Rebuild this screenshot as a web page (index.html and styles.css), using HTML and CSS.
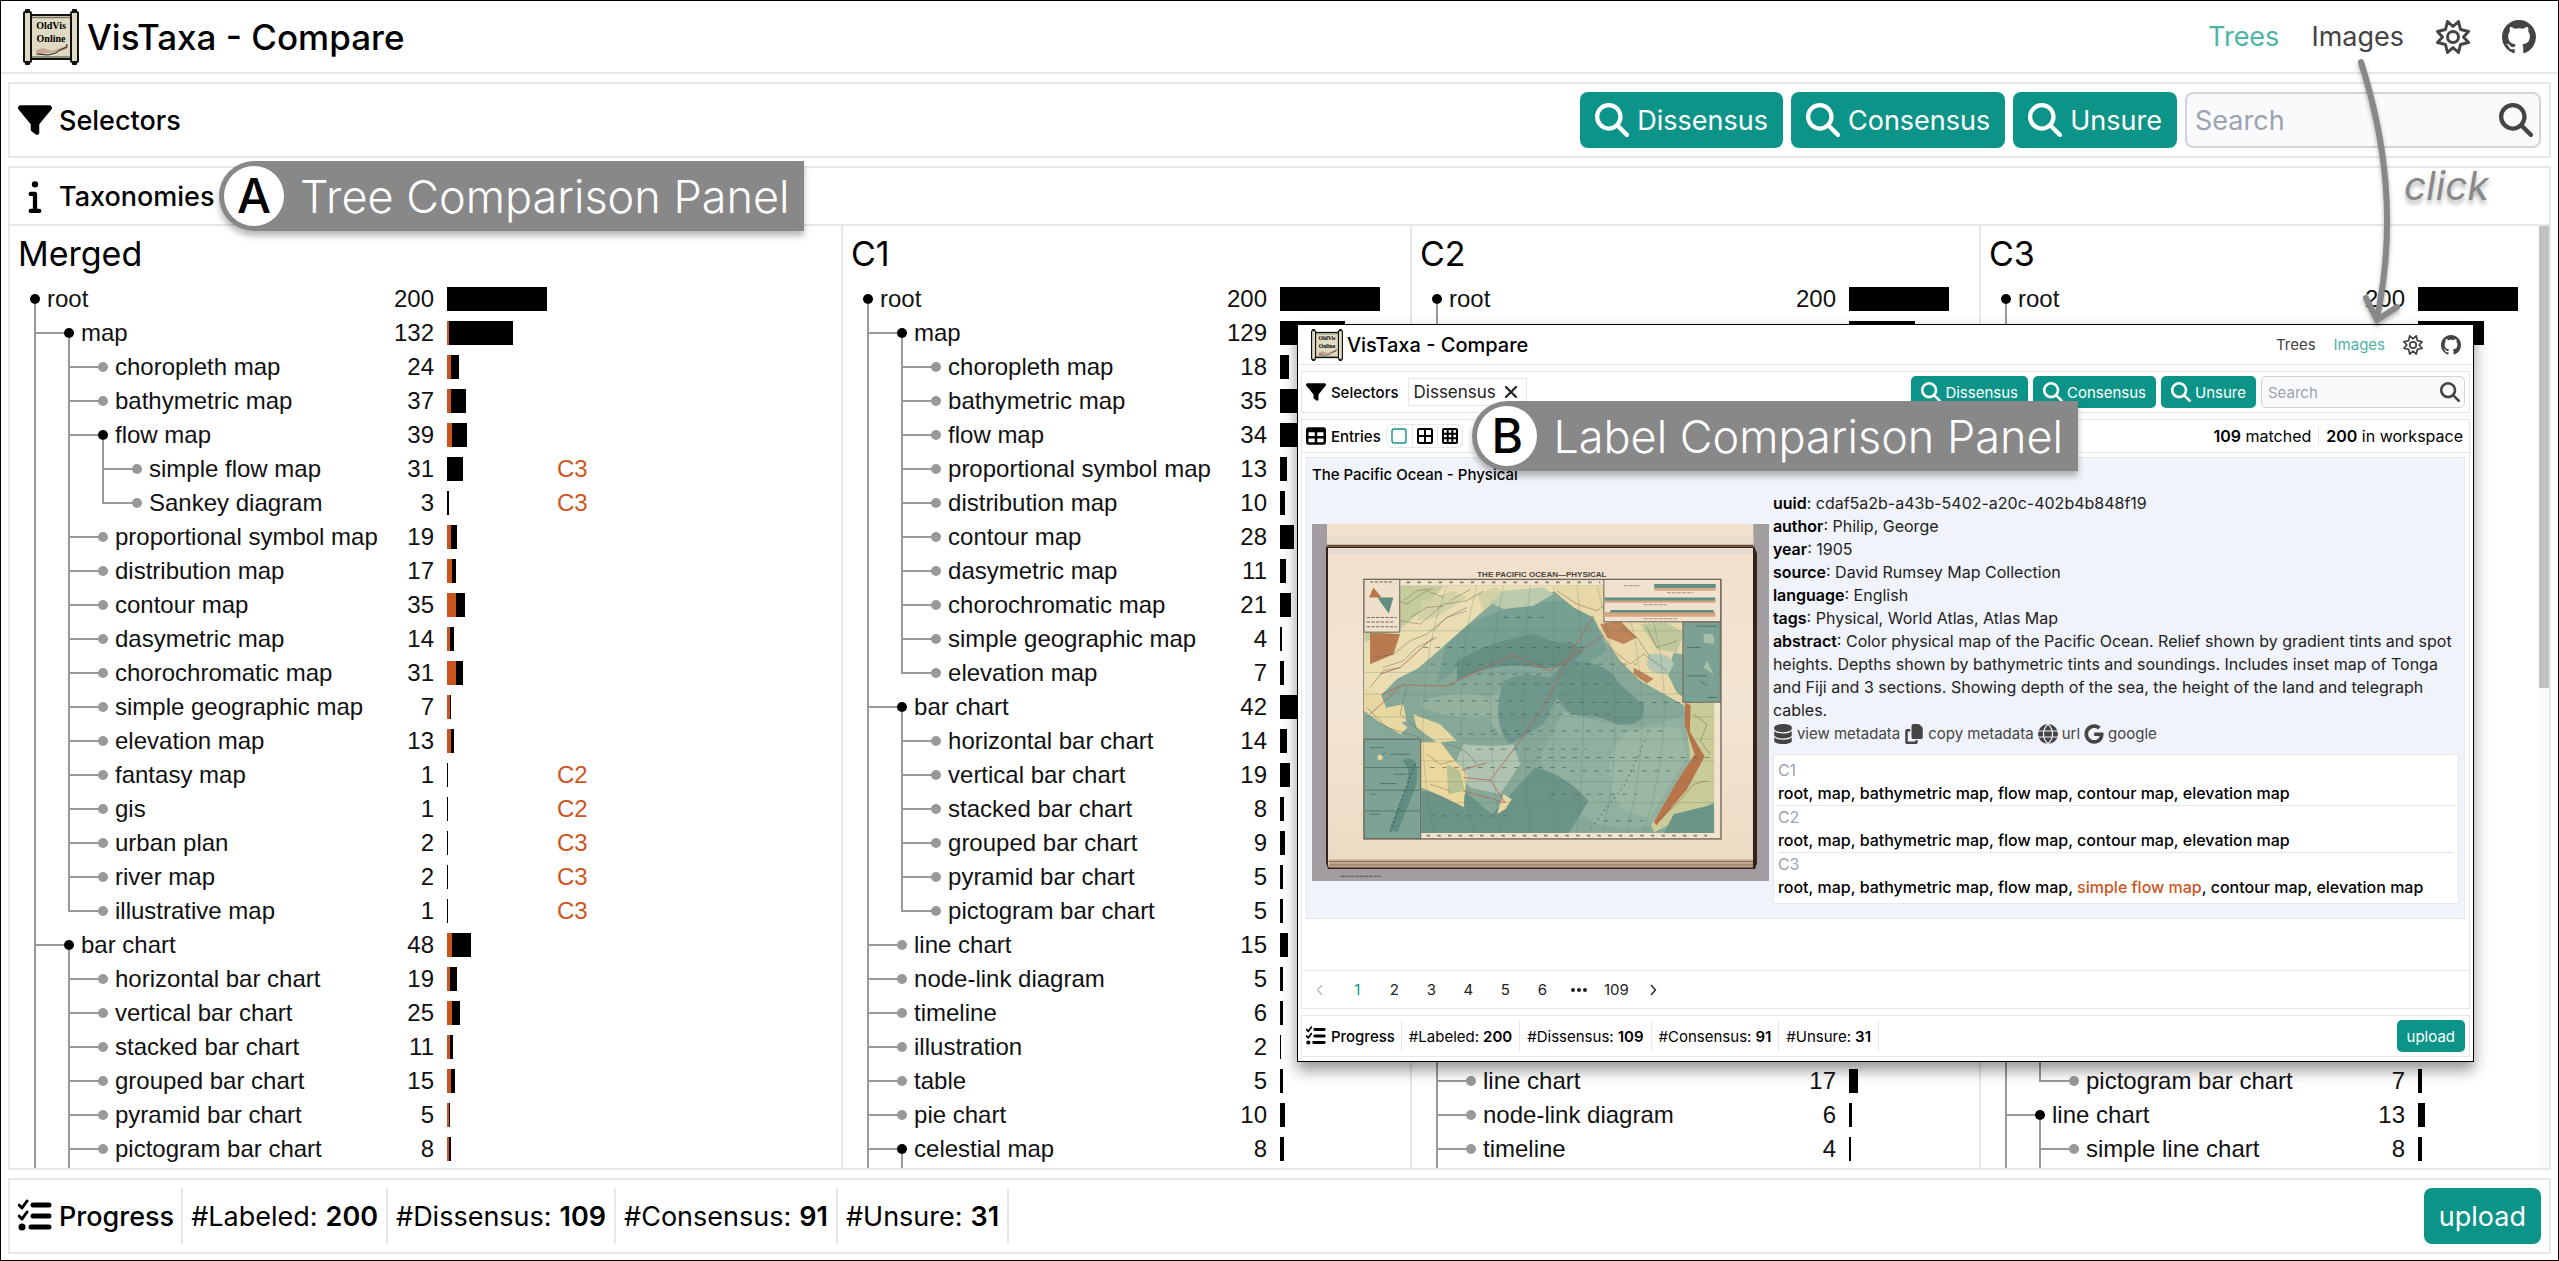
FILE: index.html
```html
<!DOCTYPE html>
<html lang="en">
<head>
<meta charset="utf-8">
<title>VisTaxa - Compare</title>
<link rel="stylesheet" href="styles.css">
</head>
<body>
<svg class="sprite" aria-hidden="true">
  <symbol id="filter" viewBox="0 0 512 512"><path d="M3.900 54.900C10.500 40.900 24.500 32 40 32H472c15.500 0 29.500 8.900 36.100 22.900s4.600 30.500-5.200 42.500L320 320.900V448c0 12.100-6.800 23.200-17.700 28.600s-23.800 4.300-33.500-3l-64-48c-8.100-6-12.800-15.500-12.800-25.600V320.900L9 97.300C-.7 85.400-2.800 68.800 3.900 54.900z"/></symbol>
  <symbol id="search" viewBox="0 0 512 512"><path d="M416 208c0 45.900-14.900 88.300-40 122.700L502.600 457.400c12.500 12.500 12.500 32.800 0 45.300s-32.800 12.500-45.300 0L330.700 376c-34.400 25.200-76.800 40-122.700 40C93.100 416 0 322.900 0 208S93.100 0 208 0S416 93.100 416 208zM208 352a144 144 0 1 0 0-288 144 144 0 1 0 0 288z"/></symbol>
  <symbol id="info" viewBox="0 0 192 512"><path d="M48 80a48 48 0 1 1 96 0A48 48 0 1 1 48 80zM0 224c0-17.700 14.300-32 32-32H96c17.700 0 32 14.300 32 32V448h32c17.700 0 32 14.300 32 32s-14.300 32-32 32H32c-17.700 0-32-14.300-32-32s14.300-32 32-32H64V256H32c-17.700 0-32-14.300-32-32z"/></symbol>
  <symbol id="list" viewBox="0 0 34 34"><path d="M1 6l3 3 5-7M1 17l3 3 5-7" fill="none" stroke="currentColor" stroke-width="3" stroke-linecap="round" stroke-linejoin="round"/><path d="M15 6h16M15 17h16M13 28h18" stroke="currentColor" stroke-width="5" stroke-linecap="round"/><circle cx="4" cy="28" r="3.500"/></symbol>
  <symbol id="gear" viewBox="0 0 34 34"><path d="M17 6.500 L22.500 1.500 L24.500 9.500 L32.500 11.500 L27.500 17 L32.500 22.500 L24.500 24.500 L22.500 32.500 L17 27.500 L11.500 32.500 L9.500 24.500 L1.500 22.500 L6.500 17 L1.500 11.500 L9.500 9.500 L11.500 1.500Z" fill="none" stroke="currentColor" stroke-width="3" stroke-linejoin="round"/><circle cx="17" cy="17" r="5.500" fill="none" stroke="currentColor" stroke-width="3"/></symbol>
  <symbol id="github" viewBox="0 0 16 16"><path d="M8 0C3.580 0 0 3.580 0 8c0 3.540 2.290 6.530 5.470 7.590.4.070.55-.17.55-.38 0-.19-.01-.82-.01-1.490-2.010.37-2.530-.49-2.690-.94-.09-.23-.48-.94-.82-1.130-.28-.15-.68-.52-.01-.53.63-.01 1.080.58 1.230.82.72 1.210 1.870.87 2.330.66.070-.52.28-.87.510-1.070-1.780-.2-3.640-.89-3.640-3.950 0-.87.31-1.590.82-2.150-.08-.2-.36-1.020.08-2.120 0 0 .67-.21 2.200.82.64-.18 1.320-.27 2-.27s1.360.09 2 .27c1.530-1.040 2.200-.82 2.200-.82.44 1.100.16 1.920.08 2.120.51.56.82 1.270.82 2.150 0 3.070-1.870 3.750-3.650 3.950.29.25.54.73.54 1.480 0 1.070-.01 1.930-.01 2.200 0 .21.15.46.55.38A8.010 8.010 0 0 0 16 8c0-4.420-3.580-8-8-8z"/></symbol>
  <symbol id="database" viewBox="0 0 448 512"><path d="M448 80v48c0 44.200-100.300 80-224 80S0 172.200 0 128V80C0 35.800 100.300 0 224 0S448 35.800 448 80zM393.200 214.700c20.800-7.400 39.900-16.900 54.800-28.600V288c0 44.200-100.300 80-224 80S0 332.200 0 288V186.100c14.900 11.800 34 21.200 54.800 28.600C99.700 230.700 159.500 240 224 240s124.300-9.300 169.200-25.300zM0 346.100c14.900 11.800 34 21.200 54.800 28.600C99.700 390.700 159.500 400 224 400s124.300-9.300 169.200-25.300c20.800-7.400 39.900-16.900 54.800-28.600V432c0 44.200-100.300 80-224 80S0 476.200 0 432V346.100z"/></symbol>
  <symbol id="copy" viewBox="0 0 448 512"><path d="M208 0H332.100c12.700 0 24.900 5.100 33.900 14.100l67.900 67.900c9 9 14.100 21.200 14.100 33.900V336c0 26.500-21.500 48-48 48H208c-26.500 0-48-21.500-48-48V48c0-26.500 21.500-48 48-48zM48 128h80v64H64V448H256V416h64v48c0 26.500-21.500 48-48 48H48c-26.500 0-48-21.500-48-48V176c0-26.500 21.500-48 48-48z"/></symbol>
  <symbol id="globe" viewBox="0 0 20 20"><circle cx="10" cy="10" r="10"/><path d="M0 7h20M0 13h20M10 0C4 6 4 14 10 20M10 0c6 6 6 14 0 20" fill="none" stroke="#f0f3f9" stroke-width="1.200"/></symbol>
  <symbol id="google" viewBox="0 0 488 512"><path d="M488 261.800C488 403.300 391.100 504 248 504 110.800 504 0 393.200 0 256S110.800 8 248 8c66.800 0 123 24.500 166.300 64.900l-67.500 64.900C258.500 52.600 94.300 116.600 94.300 256c0 86.500 69.100 156.600 153.700 156.600 98.200 0 135-70.400 140.800-106.900H248v-85.300h236.100c2.300 12.700 3.900 24.900 3.900 41.400z"/></symbol>
  <symbol id="table" viewBox="0 0 512 512"><path d="M64 256V160H224v96H64zm0 64H224v96H64V320zm224 96V320H448v96H288zM448 256H288V160H448v96zM64 32C28.700 32 0 60.700 0 96V416c0 35.300 28.700 64 64 64H448c35.300 0 64-28.700 64-64V96c0-35.300-28.700-64-64-64H64z"/></symbol>
  <symbol id="grid1" viewBox="0 0 16 16"><rect x="1" y="1" width="14" height="14" rx="2" fill="none" stroke="currentColor" stroke-width="1.400"/></symbol>
  <symbol id="grid2" viewBox="0 0 16 16"><path d="M2 1h12a1 1 0 0 1 1 1v12a1 1 0 0 1-1 1H2a1 1 0 0 1-1-1V2a1 1 0 0 1 1-1zM8 1v14M1 8h14" fill="none" stroke="currentColor" stroke-width="2"/></symbol>
  <symbol id="grid3" viewBox="0 0 16 16"><path d="M2 1h12a1 1 0 0 1 1 1v12a1 1 0 0 1-1 1H2a1 1 0 0 1-1-1V2a1 1 0 0 1 1-1zM5.700 1v14M10.300 1v14M1 5.700h14M1 10.300h14" fill="none" stroke="currentColor" stroke-width="2"/></symbol>
  <symbol id="cross" viewBox="0 0 14 14"><path d="M2 2l10 10M12 2L2 12" stroke="currentColor" stroke-width="2.200" stroke-linecap="round"/></symbol>
  <symbol id="prev" viewBox="0 0 10 12"><path d="M7 1L2.500 6 7 11" fill="none" stroke="currentColor" stroke-width="1.400"/></symbol>
  <symbol id="next" viewBox="0 0 10 12"><path d="M3 1l4.500 5L3 11" fill="none" stroke="currentColor" stroke-width="1.400"/></symbol>
  <symbol id="dots" viewBox="0 0 16 4"><circle cx="2" cy="2" r="2"/><circle cx="8" cy="2" r="2"/><circle cx="14" cy="2" r="2"/></symbol>
  <symbol id="logo" viewBox="0 0 56 56">
    <rect x="6" y="6" width="44" height="44" fill="#dedac3" stroke="#111" stroke-width="2"/>
    <path d="M8 8.500h40M8 48h40" stroke="#77756a" stroke-width="1.500"/>
    <g fill="#111"><rect x="2" y="0" width="5" height="56" rx="1"/><rect x="49" y="0" width="5" height="56" rx="1"/></g>
    <g fill="#dedac3" stroke="#111" stroke-width="2"><rect x="1" y="3" width="7" height="50" rx="1"/><rect x="48" y="3" width="7" height="50" rx="1"/></g>
    <text x="28" y="20" text-anchor="middle" font-family="Liberation Serif, serif" font-weight="700" font-size="10">OldVis</text>
    <text x="28" y="33" text-anchor="middle" font-family="Liberation Serif, serif" font-weight="700" font-size="10">Online</text>
    <path d="M13 41l7-2 9 3 8-3 7-3v4l-9 3-10 1-12 2z" fill="#c9a692"/><path d="M14 45l11 1 8-2 4-3 7-3v-3" fill="none" stroke="#222" stroke-width="1"/>
  </symbol>
</svg>

<div class="app">
  <header class="top">
    <svg class="logo"><use href="#logo"/></svg>
    <h1>VisTaxa - Compare</h1>
    <nav>
      <a href="#trees" class="active">Trees</a>
      <a href="#images">Images</a>
      <a href="#settings" aria-label="Settings"><svg class="icon"><use href="#gear"/></svg></a>
      <a href="#github" aria-label="GitHub"><svg class="icon"><use href="#github"/></svg></a>
    </nav>
  </header>

  <section class="panel bar">
    <h2><svg class="icon"><use href="#filter"/></svg>Selectors</h2>
    <div class="actions">
      <button><svg class="icon"><use href="#search"/></svg>Dissensus</button>
      <button><svg class="icon"><use href="#search"/></svg>Consensus</button>
      <button><svg class="icon"><use href="#search"/></svg>Unsure</button>
      <label class="search"><input type="text" placeholder="Search" aria-label="Search"><svg class="icon"><use href="#search"/></svg></label>
    </div>
  </section>

  <section class="panel taxonomies">
    <h2><svg class="icon"><use href="#info"/></svg>Taxonomies</h2>
    <div class="columns">
      <div class="column wide"><h3>Merged</h3><div class="tree" id="merged"></div></div>
      <div class="column"><h3>C1</h3><div class="tree" id="c1"></div></div>
      <div class="column"><h3>C2</h3><div class="tree" id="c2"></div></div>
      <div class="column last"><h3>C3</h3><div class="tree" id="c3"></div></div>
      <div class="scroll"><div class="thumb"></div></div>
    </div>
  </section>

  <footer class="panel bar">
    <h2><svg class="icon"><use href="#list"/></svg>Progress</h2>
    <ul class="stats">
      <li>#Labeled: <b>200</b></li><li>#Dissensus: <b>109</b></li><li>#Consensus: <b>91</b></li><li>#Unsure: <b>31</b></li>
    </ul>
    <button class="upload">upload</button>
  </footer>
</div>

<div class="inset">
  <header class="top">
    <svg class="logo"><use href="#logo"/></svg>
    <h1>VisTaxa - Compare</h1>
    <nav>
      <a href="#trees">Trees</a>
      <a href="#images" class="active">Images</a>
      <a href="#settings" aria-label="Settings"><svg class="icon"><use href="#gear"/></svg></a>
      <a href="#github" aria-label="GitHub"><svg class="icon"><use href="#github"/></svg></a>
    </nav>
  </header>
  <section class="panel bar">
    <h2><svg class="icon"><use href="#filter"/></svg>Selectors</h2>
    <span class="tag">Dissensus <svg><use href="#cross"/></svg></span>
    <div class="actions">
      <button><svg class="icon"><use href="#search"/></svg>Dissensus</button>
      <button><svg class="icon"><use href="#search"/></svg>Consensus</button>
      <button><svg class="icon"><use href="#search"/></svg>Unsure</button>
      <label class="search"><input type="text" placeholder="Search" aria-label="Search"><svg class="icon"><use href="#search"/></svg></label>
    </div>
  </section>
  <section class="panel entries">
    <div class="entries-head">
      <h2><svg class="icon"><use href="#table"/></svg>Entries</h2>
      <div class="toggle">
        <button class="on" aria-label="One column"><svg><use href="#grid1"/></svg></button>
        <button aria-label="Two columns"><svg><use href="#grid2"/></svg></button>
        <button aria-label="Three columns"><svg><use href="#grid3"/></svg></button>
      </div>
      <p class="matched"><span><b>109</b> matched</span><span><b>200</b> in workspace</span></p>
    </div>
    <article class="card">
      <h3>The Pacific Ocean - Physical</h3>
      <div class="entry">
        <svg class="map" viewBox="66 70 1370 1070" role="img" aria-label="Map of the Pacific Ocean">
          <defs>
            <linearGradient id="paper" x1="0" y1="0" x2="0" y2="1"><stop offset="0" stop-color="#f0e0cc"/><stop offset=".5" stop-color="#f3e5d3"/><stop offset="1" stop-color="#ecdac3"/></linearGradient>
            <clipPath id="frame"><rect x="222" y="254" width="1050" height="742"/></clipPath>
          </defs>
          <rect x="66" y="70" width="1370" height="1070" fill="#a29da1"/>
          <rect x="111" y="70" width="1278" height="70" fill="#f1e2cf"/>
          <rect x="111" y="108" width="1278" height="22" fill="#e9dccd"/>
          <path d="M108 138h1284l8 20v930l-6 16H114l-6-20z" fill="#33231a"/>
          <path d="M114 142h1274v955H114z" fill="url(#paper)"/>
          <path d="M114 152h1274" stroke="#e5dbd0" stroke-width="16"/>
          <path d="M111 135h1278" stroke="#5c4434" stroke-width="6"/>
          <path d="M116 1076h1272v24H116z" fill="#bfa68c"/><path d="M116 1082h1272M116 1092h1272" stroke="#8d735c" stroke-width="3"/>
          <rect x="222" y="236" width="1070" height="778" fill="#f2e4cc" stroke="#6b655a" stroke-width="4"/>
          <g clip-path="url(#frame)">
            <rect x="222" y="254" width="1050" height="742" fill="#85a899"/>
            <path d="M470 420q150-130 420-120l60 150-110 70q-150-80-300-50l-100 80z" fill="#769e91"/>
            <path d="M500 480q100-60 230-80 90 40 110 20l40 30q-40 60-140 50-130-20-240 40z" fill="#688f84"/>
            <path d="M830 480q120 0 150 60 60 60 80 70 10 70-80 60-80-40-130-20-60-60-70-120z" fill="#6c9387"/>
            <path d="M395 600q120-40 200-10l100-60 60 40-70 130q-60 20-90-50-100 10-200-30z" fill="#a0b9a5" opacity=".6"/>
            <path d="M640 540q90-40 180 10l-60 120-100 60q-60-60-20-190z" fill="#70978b"/>
            <path d="M820 630q110 40 230 50 80-20 140-40l20 170-110 160q-80 20-180 0-150-90-170-200z" fill="#91b09f"/>
            <path d="M1000 700q90-30 170-20l20 90-110 180-80-20q-90-120 0-230z" fill="#9bb7a5"/>
            <path d="M395 870l140 10 70 60 130-140q90 20 160 100l-60 96H395z" fill="#6c9387"/>
            <path d="M520 730q90 10 150 0l20 60-60 90-90-20-50-60z" fill="#b0c3b0"/>
            <path d="M222 254h600l-30 20-130 10-40 10-80 70-90 80-70 60-60 30-50 50-50 40z" fill="#e9ddb1"/>
            <path d="M222 254h240l-70 80-60 50-108 40z" fill="#c5cb9d"/>
            <path d="M400 300l90-30 40 20-90 60-60 10zM560 280l60-20 20 20-60 50z" fill="#d3d2a6"/>
            <path d="M240 396l90 4-20 60-70 30z" fill="#b87b50"/>
            <path d="M640 270l120-10 30 20-60 35-90 10-40-20z" fill="#bccbae"/>
            <path d="M790 270l60 50 60 30 30 60 50 70 60 60 90 50 70 40 10-14-60-40-30-60 20-60 120 20V254H790z" fill="#e8d8a8"/>
            <path d="M930 370l60-10 50 50-40 20-50-20zM1030 500l60 34-20 14-40-28z" fill="#bd8558"/>
            <path d="M1050 370l80-5 50 30-20 60-60-10z" fill="#bfc89d"/><path d="M1075 460q60-10 75 30l-15 30q-60 0-65-30z" fill="#b5c8b5"/>
            <path d="M222 560l50 20 20 50 60 50-20 20-70-40-40-30zM290 620l50-10 10 50-50 20zM370 640l80 30 50 50-60 5-60-45z" fill="#e7d8a2"/>
            <path d="M392 724l60 0 30 40 50 60-10 70 0 25-60-30-70-30z" fill="#ecd79c"/><path d="M470 790l40 20 14 60-50 10z" fill="#b9c392"/>
            <path d="M640 880l25 15-20 30-25 15z" fill="#e7d8a2"/>
            <path d="M1180 600l92 4v300l-120 60-60 30-10-20 60-90 60-90-10-90z" fill="#c9cb99"/>
            <path d="M1185 605l16 8-2 80 44 74-54 100-90 106-8-10 66-116 56-86-30-90z" fill="#b9754a"/>
            <path d="M1150 940l122-30v86h-150z" fill="#6c9588"/>
            <g fill="none" stroke="#6a5f45" stroke-width="2" opacity=".65">
              <path d="M240 340l60-50 50 20 60-40 50 20M260 390l70-30 60 10 70-60 70-10 50-30M250 470l60-10 50-40 50-20 60-50 60-20M280 500l60-20 40-40 60-30M240 560l40-50 50-10M340 300l40-30 50-6M360 350l50-30 50-4M430 390l40-40 60-30M480 300l60-34M800 270l60 40 60 20 50-40 70 20 70-30M930 390l40 60 50 40 40-30 70 50M990 380l50 30 40 60M1070 380l30 60 60-20M1000 340l-30-60M1210 640l40 30-20 50 30 40M1100 960l60-50 50-60 40-10M410 760l40 30 40-10M420 850l60 20M470 730q60 10 90 60M230 620l60 60 100 30M350 560l-20 80 60 50"/>
            </g>
            <g fill="none" stroke="#587a70" stroke-width="1.500" opacity=".5">
              <path d="M222 390h956M222 515h956M222 580h956M222 648h1050M222 715h1050M222 780h1050M222 842h1050M222 905h1050M560 254q-90 330-10 742M640 254q-70 330-10 742M720 254q-40 340 0 742M790 254q0 340 0 742M860 254q40 340 0 742M920 254q100 340 20 742M990 254q120 340 20 742M470 254q-120 330-40 742M1070 300q110 320-10 696"/>
            </g>
            <g fill="none" stroke="#3c5850" stroke-width="2.500" stroke-dasharray="14 22" opacity=".7">
              <path d="M400 440h500M420 490h620M480 550h500M400 600h300M760 605h480M480 640h480M600 690h520M560 745h330M740 770h540M420 800h420M840 810h300M420 945h240M780 880h260M940 960h120M560 520h200M640 350h120M500 700h240"/>
            </g>
            <g fill="none" stroke="#b5655a" stroke-width="2.500"><path d="M910 345L840 460 770 600 690 720 600 838 520 830M940 403L780 510 668 462 468 556 340 552 275 580M270 520l60-20 100-90M240 640l100-90M520 870l125 35-45-68M515 808l75-22"/></g>
            <path d="M1064 720l-60 130-100 130" fill="none" stroke="#47675f" stroke-width="3" stroke-dasharray="4 12"/>
          </g>
          <g stroke="#6b655a" stroke-width="3">
            <rect x="222" y="236" width="107" height="158" fill="#eee0ca"/><rect x="941" y="236" width="350" height="127" fill="#f1e2d0"/>
            <rect x="1178" y="364" width="112" height="240" fill="#7ba195"/><rect x="222" y="715" width="170" height="298" fill="#7da296"/>
          </g>
          <path d="M250 260l25 30h-38z" fill="#b9754a"/><path d="M262 290h48l-14 48z" fill="#5f8d84"/>
          <path d="M230 350h90M230 364h80M230 378h90M240 244h70" stroke="#776b5b" stroke-width="3" stroke-dasharray="10 4"/>
          <path d="M1092 262h184v8h-184zM943 298h332v8H943zM943 334h332v14H943z" fill="#d9a582"/><path d="M1092 250h184v12h-184zM943 290h332v9H943zM960 328h310v7H960z" fill="#5e8f82"/>
          <path d="M1000 255h50M1130 276h80M1060 312h70M1060 354h100" stroke="#776b5b" stroke-width="2" stroke-dasharray="12 3"/>
          <path d="M345 790q30-20 20 60l-55 140" fill="none" stroke="#608c81" stroke-width="26"/><path d="M375 790l-35 90-40 115" fill="none" stroke="#2f4a44" stroke-width="3" stroke-dasharray="5 9"/>
          <path d="M262 772l24-16M240 740h40M300 760h60M270 848h50M240 880h20M310 820h40M240 940h30M225 800h165M225 868h165M225 930h165" stroke="#46635b" stroke-width="2"/>
          <circle cx="270" cy="770" r="8" fill="#dfd5a5"/><path d="M1240 400q40-10 30 30l-30-5zM1250 480l20 40-30-20z" fill="#a8bfaa"/><path d="M1220 376h60M1190 440h40M1190 525h60M1230 540l20 15M1250 590h30" stroke="#3f5b54" stroke-width="2"/>
          <path d="M350 245h580M410 1004h840" stroke="#857b6c" stroke-width="5" stroke-dasharray="10 22"/>
          <path d="M152 1126h120" stroke="#55505a" stroke-width="3" stroke-dasharray="12 2"/>
          <text x="755" y="228" text-anchor="middle" font-family="Liberation Sans, sans-serif" font-weight="700" font-size="24" fill="#4a443d">THE PACIFIC OCEAN—PHYSICAL</text>
        </svg>
        <div class="meta">
          <p><b>uuid</b>: cdaf5a2b-a43b-5402-a20c-402b4b848f19</p>
          <p><b>author</b>: Philip, George</p>
          <p><b>year</b>: 1905</p>
          <p><b>source</b>: David Rumsey Map Collection</p>
          <p><b>language</b>: English</p>
          <p><b>tags</b>: Physical, World Atlas, Atlas Map</p>
          <p><b>abstract</b>: Color physical map of the Pacific Ocean. Relief shown by gradient tints and spot heights. Depths shown by bathymetric tints and soundings. Includes inset map of Tonga and Fiji and 3 sections. Showing depth of the sea, the height of the land and telegraph cables.</p>
          <p class="links">
            <a href="#view"><svg><use href="#database"/></svg>view metadata</a>
            <a href="#copy"><svg><use href="#copy"/></svg>copy metadata</a>
            <a href="#url"><svg><use href="#globe"/></svg>url</a>
            <a href="#google"><svg><use href="#google"/></svg>google</a>
          </p>
          <dl class="labels">
            <div><dt>C1</dt><dd>root, map, bathymetric map, flow map, contour map, elevation map</dd></div>
            <div><dt>C2</dt><dd>root, map, bathymetric map, flow map, contour map, elevation map</dd></div>
            <div><dt>C3</dt><dd>root, map, bathymetric map, flow map, <em>simple flow map</em>, contour map, elevation map</dd></div>
          </dl>
        </div>
      </div>
    </article>
    <div class="pages">
      <button class="off" aria-label="Previous"><svg><use href="#prev"/></svg></button><button class="on">1</button><button>2</button><button>3</button><button>4</button><button>5</button><button>6</button><button aria-label="More"><svg class="dots"><use href="#dots"/></svg></button><button>109</button><button aria-label="Next"><svg><use href="#next"/></svg></button>
    </div>
  </section>
  <footer class="panel bar">
    <h2><svg class="icon"><use href="#list"/></svg>Progress</h2>
    <ul class="stats">
      <li>#Labeled: <b>200</b></li><li>#Dissensus: <b>109</b></li><li>#Consensus: <b>91</b></li><li>#Unsure: <b>31</b></li>
    </ul>
    <button class="upload">upload</button>
  </footer>
</div>

<div class="callout callout-a"><span>A</span>Tree Comparison Panel</div>
<div class="callout callout-b"><span>B</span>Label Comparison Panel</div>
<svg class="arrow" viewBox="0 0 60 280"><path d="M10 6C34 82 46 166 26 262M15 242L26 264 46 251" fill="none" stroke="#888" stroke-width="6" stroke-linecap="round"/></svg>
<span class="click">click</span>
<script src="trees.js"></script>
</body>
</html>
```
FILE: trees.js
```js
// Each row: [depth, label, count, differing width, only in]
const trees = {
  merged: { open: [0, 1], rows: [
    [0, 'root', 200, 0], [1, 'map', 132, 2], [2, 'choropleth map', 24, 4], [2, 'bathymetric map', 37, 4],
    [2, 'flow map', 39, 5], [3, 'simple flow map', 31, 0, 'C3'], [3, 'Sankey diagram', 3, 0, 'C3'],
    [2, 'proportional symbol map', 19, 4], [2, 'distribution map', 17, 5], [2, 'contour map', 35, 9],
    [2, 'dasymetric map', 14, 3], [2, 'chorochromatic map', 31, 9], [2, 'simple geographic map', 7, 3],
    [2, 'elevation map', 13, 4], [2, 'fantasy map', 1, 0, 'C2'], [2, 'gis', 1, 0, 'C2'],
    [2, 'urban plan', 2, 0, 'C3'], [2, 'river map', 2, 0, 'C3'], [2, 'illustrative map', 1, 0, 'C3'],
    [1, 'bar chart', 48, 5], [2, 'horizontal bar chart', 19, 3], [2, 'vertical bar chart', 25, 5],
    [2, 'stacked bar chart', 11, 3], [2, 'grouped bar chart', 15, 4], [2, 'pyramid bar chart', 5, 2],
    [2, 'pictogram bar chart', 8, 2]] },
  c1: { open: [0, 1], rows: [
    [0, 'root', 200], [1, 'map', 129], [2, 'choropleth map', 18], [2, 'bathymetric map', 35], [2, 'flow map', 34],
    [2, 'proportional symbol map', 13], [2, 'distribution map', 10], [2, 'contour map', 28], [2, 'dasymetric map', 11],
    [2, 'chorochromatic map', 21], [2, 'simple geographic map', 4], [2, 'elevation map', 7], [1, 'bar chart', 42],
    [2, 'horizontal bar chart', 14], [2, 'vertical bar chart', 19], [2, 'stacked bar chart', 8],
    [2, 'grouped bar chart', 9], [2, 'pyramid bar chart', 5], [2, 'pictogram bar chart', 5], [1, 'line chart', 15],
    [1, 'node-link diagram', 5], [1, 'timeline', 6], [1, 'illustration', 2], [1, 'table', 5], [1, 'pie chart', 10],
    [1, 'celestial map', 8]] },
  c2: { open: [0], rows: [
    [0, 'root', 200], [1, '', 131], ...Array(21).fill([2, '', 0]),
    [1, 'line chart', 17], [1, 'node-link diagram', 6], [1, 'timeline', 4]] },
  c3: { open: [0, 1], rows: [
    [0, 'root', 200], [1, '', 132], ...Array(21).fill([2, '', 0]),
    [2, 'pictogram bar chart', 7], [1, 'line chart', 13], [2, 'simple line chart', 8]] },
};

function add(parent, cls, text) {
  const el = document.createElement('span');
  el.className = cls;
  if (text !== undefined) el.textContent = text;
  parent.appendChild(el);
  return el;
}

for (const [id, { open, rows }] of Object.entries(trees)) {
  const root = document.getElementById(id);
  // true when another node hangs from the line of this level further down
  const continues = (i, level) => {
    for (let j = i + 1; j < rows.length; j++) {
      if (rows[j][0] <= level) return false;
      if (rows[j][0] === level + 1) return true;
    }
    return open.includes(level);
  };
  rows.forEach(([depth, label, count, diff, only], i) => {
    const row = document.createElement('div');
    row.className = 'row';
    for (let k = 0; k < depth; k++) {
      const more = continues(i, k);
      add(row, 'guide' + (more ? ' pass' : '') + (k === depth - 1 ? ' turn' : ''));
    }
    const parent = i + 1 < rows.length ? rows[i + 1][0] > depth : open.includes(depth);
    add(row, 'dot' + (parent ? ' parent' : ''));
    add(row, 'label', label);
    add(row, 'count', label ? count : '');
    const bars = add(row, 'bars');
    if (diff) add(bars, 'diff').style.width = diff + 'px';
    add(bars, 'value').style.width = Math.max(count / 2 - (diff || 0), count ? 1 : 0) + 'px';
    if (only) add(row, 'only', only);
    root.appendChild(row);
  });
}
```
FILE: styles.css
```css
* { box-sizing: border-box; }
body { margin: 0; background: #fff; color: #000; font-family: Inter, "Liberation Sans", sans-serif; position: relative; overflow: hidden; }
h1, h2, h3, p, ul, dl, dd { margin: 0; padding: 0; }
ul { list-style: none; }
a { color: #444; text-decoration: none; }
button { font: inherit; border: 0; background: none; padding: 0; color: inherit; }
svg { fill: currentColor; flex: none; display: block; }
b { font-weight: 600; }
.sprite { position: absolute; width: 0; height: 0; }

.app { height: 100vh; border: 1px solid #000; display: flex; flex-direction: column; gap: 8px; padding-bottom: 6px; font-size: 27px; }
.top { display: flex; align-items: center; gap: 8px; height: 73px; padding: 0 22px; border-bottom: 2px solid #e5e7eb; }
.logo { width: 56px; height: 56px; }
.top h1 { font-size: 35px; font-weight: 500; }
.top nav { margin-left: auto; display: flex; align-items: center; gap: 32px; }
.top .active { color: #4db3a4; }
.icon { width: 34px; height: 34px; }

.panel { margin: 0 7px; border: 2px solid #e5e7eb; }
.bar { display: flex; align-items: center; height: 76px; padding: 0 8px; flex: none; }
.panel h2 { display: flex; align-items: center; gap: 7px; font-size: 27px; font-weight: 500; }
.actions { margin-left: auto; display: flex; gap: 8px; }
.actions button, .upload { display: flex; align-items: center; gap: 8px; height: 56px; padding: 0 15px; border-radius: 8px; background: #0d9488; color: #fff; }
.upload { margin-left: auto; }
.search { display: flex; align-items: center; width: 356px; height: 56px; padding: 0 6px; border: 2px solid #d1d5db; border-radius: 8px; background: #f9fafb; color: #444; }
.search input { flex: 1; min-width: 0; border: 0; background: none; font: inherit; padding: 0 2px; }
.search input::placeholder { color: #9ca3af; }
.stats { display: flex; align-self: stretch; padding: 8px 0; margin-left: 7px; }
.stats li { display: flex; align-items: center; gap: 8px; padding: 0 8px; border-right: 2px solid #e5e7eb; }
.stats li:first-child { border-left: 2px solid #e5e7eb; }

.taxonomies { flex: 1; min-height: 0; display: flex; flex-direction: column; }
.taxonomies h2 { height: 58px; flex: none; padding: 0 8px; border-bottom: 2px solid #e5e7eb; }
.columns { flex: 1; min-height: 0; display: flex; overflow: hidden; }
.column { flex: 569 1 0; min-width: 0; border-right: 2px solid #e5e7eb; }
.column.wide { flex-grow: 834; }
.column.last { flex-grow: 560; border-right: 0; }
.column h3 { padding-left: 8px; font-size: 34px; font-weight: 400; line-height: 56px; }
.scroll { width: 10px; background: #fafafa; }
.thumb { height: 49%; background: #c1c1c1; }

.tree { width: 527px; margin-left: 20px; font: 24px/34px "Liberation Sans", Arial, sans-serif; color: #111; }
.row { display: flex; align-items: center; height: 34px; }
.guide { position: relative; width: 34px; height: 34px; flex: none; }
.guide::before, .guide::after, .parent::after { content: ""; position: absolute; background: #999; }
.guide::before { left: 4px; top: 0; width: 2px; height: 0; }
.guide.turn::before { height: 18px; }
.guide.pass::before { height: 34px; }
.guide.turn::after { left: 4px; top: 16px; width: 34px; height: 2px; }
.dot { position: relative; flex: none; width: 10px; height: 10px; border-radius: 5px; background: #999; }
.dot.parent { background: #000; }
.parent::after { left: 4px; top: 10px; width: 2px; height: 12px; }
.row:last-child .pass::before { height: 40px; }
.row:last-child .parent::after { height: 20px; }
.label { flex: 1; padding-left: 7px; white-space: nowrap; }
.count { width: 50px; margin-left: -50px; flex: none; text-align: right; }
.bars { display: flex; width: 123px; height: 24px; padding-left: 13px; flex: none; }
.only { width: 80px; margin-right: -80px; flex: none; color: #cc5522; }
.diff { background: #c9541c; }
.value { background: #000; }

.inset { position: absolute; top: 324px; right: 85px; width: 46%; border: 1px solid #000; background: #fff; box-shadow: 0 8px 14px rgba(0,0,0,.42); display: flex; flex-direction: column; gap: 6px; padding-bottom: 4px; font-size: 15px; }
.inset .top { height: 40px; padding: 0 12px 0 13px; gap: 4px; border-width: 0 0 1px; }
.inset .logo { width: 32px; height: 32px; }
.inset .top h1 { font-size: 20px; }
.inset .top nav { gap: 18px; }
.inset .icon { width: 20px; height: 20px; }
.inset .panel { margin: 0 3px; border-width: 1px; }
.inset .bar { height: 42px; padding: 0 4px; }
.inset .panel h2 { gap: 5px; font-size: 15px; }
.tag { display: flex; align-items: center; gap: 8px; margin-left: 9px; height: 28px; padding: 0 8px 0 5px; border: 1px solid #e5e7eb; font-size: 17px; color: #222; }
.tag svg { width: 14px; height: 14px; }
.inset .actions { gap: 5px; }
.inset .actions button, .inset .upload { gap: 4px; height: 32px; padding: 0 10px; border-radius: 5px; }
.inset .search { width: 204px; height: 32px; padding: 0 4px; border-width: 1px; border-radius: 5px; }
.inset .stats { padding: 4px 0; margin-left: 6px; }
.inset .stats li { gap: 4px; padding: 0 7px; border-width: 0 1px 0 0; }
.inset .stats li:first-child { border-left-width: 1px; }
.entries-head { display: flex; align-items: center; height: 33px; padding: 0 4px; border-bottom: 1px solid #e5e7eb; }
.toggle { display: flex; margin-left: 5px; border: 1px solid #e5e7eb; border-radius: 6px; }
.toggle button { display: flex; align-items: center; justify-content: center; width: 25px; height: 22px; }
.toggle button + button { border-left: 1px solid #e5e7eb; }
.toggle svg { width: 16px; height: 16px; }
.on { color: #0d9488; }
.matched { margin-left: auto; display: flex; font-size: 16px; }
.matched span { padding: 0 7px; }
.matched span + span { padding-right: 2px; border-left: 1px solid #e5e7eb; }
.card { margin: 4px 4px 51px; padding: 0 5px 6px; border: 1px solid #e5e7eb; background: #f0f3f9; }
.card h3 { font-size: 15px; font-weight: 500; line-height: 34px; }
.entry { display: flex; align-items: center; gap: 4px; }
.map { width: 457px; height: 357px; }
.meta { flex: 1; min-width: 0; font-size: 16px; line-height: 23px; padding-bottom: 8px; }
.meta p { color: #222; }
.meta b { color: #000; }
.links { display: flex; gap: 4px; }
.meta .links { font-size: 15px; }
.links a { display: flex; align-items: center; gap: 4px; }
.links svg { width: 20px; height: 20px; }
.labels { margin-top: 9px; padding: 4px; border: 1px solid #e5e7eb; background: #fff; }
.labels div + div { border-top: 1px solid #e5e7eb; }
.labels dt { color: #9ca3af; }
.labels dd { font-weight: 500; }
.labels em { font-style: normal; color: #cc5522; }
.pages { display: flex; height: 38px; border-top: 1px solid #e5e7eb; color: #222; }
.pages button { display: flex; align-items: center; justify-content: center; width: 37px; }
.pages .on { color: #0d9488; }
.pages .off { color: #bbb; }
.pages svg { width: 10px; height: 12px; }
.pages .dots { width: 16px; height: 4px; }

.callout { position: absolute; display: flex; align-items: center; height: 70px; padding: 0 15px 0 5px; gap: 16px; border-radius: 35px 0 0 35px; background: #888; color: #fff; font-size: 45px; font-weight: 300; white-space: nowrap; box-shadow: 0 5px 6px rgba(0,0,0,.28); }
.callout span { width: 60px; height: 60px; border-radius: 30px; background: #fff; color: #000; font-size: 48px; font-weight: 500; line-height: 60px; text-align: center; }
.callout-a { left: 219px; top: 161px; }
.callout-b { right: 481px; top: 401px; }
.arrow { position: absolute; right: 148px; top: 56px; width: 60px; height: 280px; filter: drop-shadow(0 3px 2px rgba(0,0,0,.3)); }
.click { position: absolute; right: 70px; top: 162px; font-size: 39px; line-height: 48px; font-style: italic; color: #888; text-shadow: 0 4px 4px rgba(0,0,0,.3); }
```
